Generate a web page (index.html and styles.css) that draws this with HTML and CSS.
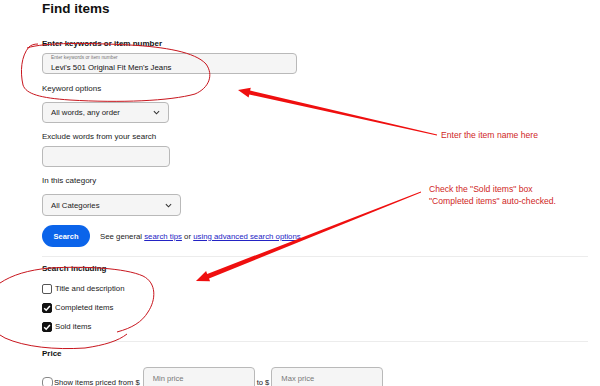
FILE: index.html
```html
<!DOCTYPE html>
<html lang="en">
<head>
    <meta charset="UTF-8">
    <title>Find items</title>
    <link rel="stylesheet" href="styles.css">
</head>
<body>

<div class="page">
    <h1 class="title">Find items</h1>

    <div class="label label-bold label-first">Enter keywords or item number</div>
    <div class="keyword-box">
        <span class="float-label">Enter keywords or item number</span>
        <span class="keyword-value">Levi's 501 Original Fit Men's Jeans</span>
    </div>

    <div class="label label-gap label-wide">Keyword options</div>
    <div class="select select-words">
        <span>All words, any order</span>
        <svg class="chevron" viewBox="0 0 8 5" width="7" height="5"><path d="M1 1 L4 4 L7 1" fill="none" stroke="#333" stroke-width="1.2"/></svg>
    </div>

    <div class="label label-gap">Exclude words from your search</div>
    <div class="text-box text-exclude"></div>

    <div class="label label-gap">In this category</div>
    <div class="select select-cat">
        <span>All Categories</span>
        <svg class="chevron" viewBox="0 0 8 5" width="7" height="5"><path d="M1 1 L4 4 L7 1" fill="none" stroke="#333" stroke-width="1.2"/></svg>
    </div>

    <div class="search-row">
        <button class="search-btn">Search</button>
        <span class="tips">See general <a href="#">search tips</a> or <a href="#">using advanced search options</a></span>
    </div>

    <div class="divider divider-one"></div>

    <div class="label label-bold section-title">Search including</div>
    <div class="check-list">
        <div class="check-row">
            <span class="box"></span>
            <span>Title and description</span>
        </div>
        <div class="check-row">
            <span class="box box-checked"><svg viewBox="0 0 10 10" width="10" height="10"><path d="M2.2 5.2 L4.2 7.2 L7.9 2.9" fill="none" stroke="#fff" stroke-width="1.5"/></svg></span>
            <span>Completed items</span>
        </div>
        <div class="check-row">
            <span class="box box-checked"><svg viewBox="0 0 10 10" width="10" height="10"><path d="M2.2 5.2 L4.2 7.2 L7.9 2.9" fill="none" stroke="#fff" stroke-width="1.5"/></svg></span>
            <span>Sold items</span>
        </div>
    </div>

    <div class="divider divider-two"></div>

    <div class="label label-bold section-title">Price</div>
    <div class="price-row">
        <span class="box box-round"></span>
        <span class="price-text">Show items priced from $</span>
        <div class="price-box">Min price</div>
        <span class="price-to">to $</span>
        <div class="price-box">Max price</div>
    </div>

    <!-- notas marcadas encima de la captura -->
    <svg class="marks" width="600" height="386" viewBox="0 0 600 386">
        <path d="M27 48 C45 42 90 43 130 45 C165 47 195 52 206 64 C214 75 209 88 195 94 C170 101 120 103 70 100 C40 98 26 94 23 85 C20 72 21 56 29 47 C31 45 34 44 38 44"
              fill="none" stroke="#c8161e" stroke-width="1"/>
        <polygon points="238,90 250.8,87.7 250.1,90.6 437.1,134.5 436.9,135.5 249.3,94.6 248.6,97.5" fill="#ef0f0f"/>
        <path d="M0 283 C12 275 28 270 50 268 C85 266 125 268 143 276 C157 283 156 300 148 312 C142 322 132 328 117 332 M127 334 C118 341 105 345 85 348 C55 350 25 347 5 338 L0 335"
              fill="none" stroke="#c8161e" stroke-width="1"/>
        <polygon points="196,281 206.1,271.1 207.2,273.9 420.9,191.6 421.1,192.4 209,278.5 210.1,281.3" fill="#ef0f0f"/>
    </svg>
    <div class="note note-one">Enter the item name here</div>
    <div class="note note-two">Check the "Sold items" box<br>"Completed items" auto-checked.</div>
</div>

</body>
</html>
```

FILE: styles.css
```css
body {
    margin: 0;
    font-family: "Liberation Sans", Arial, sans-serif;
    color: #191919;
    background: #fff;
}

.page {
    position: relative;
    height: 386px;
    overflow: hidden;
    padding-left: 42px;
}

.title {
    margin: 0;
    font-size: 13.5px;
    line-height: 18px;
    font-weight: bold;
    color: #111;
}

.label {
    font-size: 8px;
    line-height: 10px;
    color: #222;
}

.label-bold {
    font-weight: bold;
    color: #111;
}

.label-first {
    margin-top: 21px;
}

.label-gap {
    margin-top: 9px;
}

.label-wide {
    margin-top: 10px;
}

/* cajas de texto y selects */
.keyword-box {
    box-sizing: border-box;
    width: 255px;
    height: 21px;
    margin-top: 4px;
    padding: 0 8px;
    border: 1px solid #b9b9b9;
    border-radius: 4px;
    background: #f5f5f5;
}

.float-label {
    display: block;
    font-size: 4.8px;
    line-height: 7px;
    color: #767676;
}

.keyword-value {
    display: block;
    margin-top: 1px;
    font-size: 7.8px;
    line-height: 11px;
    color: #111;
}

.select {
    box-sizing: border-box;
    display: flex;
    justify-content: space-between;
    align-items: center;
    height: 21px;
    margin-top: 8px;
    padding: 0 8px;
    border: 1px solid #b9b9b9;
    border-radius: 4px;
    background: #f5f5f5;
    font-size: 7.8px;
    color: #222;
}

.select-words {
    width: 127px;
}

.select-cat {
    width: 139px;
    height: 22px;
}

.text-box {
    box-sizing: border-box;
    height: 21px;
    margin-top: 4px;
    border: 1px solid #b9b9b9;
    border-radius: 4px;
    background: #f5f5f5;
}

.text-exclude {
    width: 128px;
}

.search-row {
    display: flex;
    align-items: center;
    margin-top: 9px;
}

.search-btn {
    width: 48px;
    height: 22px;
    padding: 0;
    border: none;
    border-radius: 11px;
    background: #0b64ea;
    color: #fff;
    font-family: inherit;
    font-size: 7.5px;
    font-weight: bold;
}

.tips {
    margin-left: 10px;
    font-size: 7.8px;
    color: #222;
}

.tips a {
    color: #2323c4;
}

.divider {
    width: 546px;
    height: 1px;
    background: #ececec;
}

.divider-one {
    margin-top: 9px;
}

.divider-two {
    margin-top: 5px;
}

.section-title {
    margin-top: 7px;
}

.check-list {
    margin-top: 5px;
}

.check-row {
    display: flex;
    align-items: center;
    height: 19px;
    font-size: 7.8px;
    color: #222;
}

.box {
    box-sizing: border-box;
    flex: none;
    width: 10px;
    height: 10px;
    margin-right: 3px;
    border: 1px solid #555;
    border-radius: 2px;
    background: #fff;
}

.box-checked {
    border-color: #111;
    background: #111;
}

.box-checked svg {
    display: block;
    margin: -1px;
}

.box-round {
    width: 11px;
    height: 11px;
    margin-right: 1px;
    border-color: #888;
    border-radius: 4px;
}

.price-row {
    display: flex;
    align-items: center;
    margin-top: 8px;
    font-size: 7.6px;
    color: #222;
}

.price-text {
    margin-right: 3px;
}

.price-box {
    box-sizing: border-box;
    width: 112px;
    height: 30px;
    padding: 6px 0 0 9px;
    border: 1px solid #b9b9b9;
    border-radius: 4px;
    background: #f5f5f5;
    color: #777;
    line-height: 10px;
}

.price-to {
    margin: 0 2px 0 2px;
}

/* anotaciones */
.marks {
    position: absolute;
    top: 0;
    left: 0;
    pointer-events: none;
}

.note {
    position: absolute;
    font-size: 8.6px;
    line-height: 12px;
    color: #cf1f26;
}

.note-one {
    left: 441px;
    top: 129px;
}

.note-two {
    left: 429px;
    top: 183px;
}
```
